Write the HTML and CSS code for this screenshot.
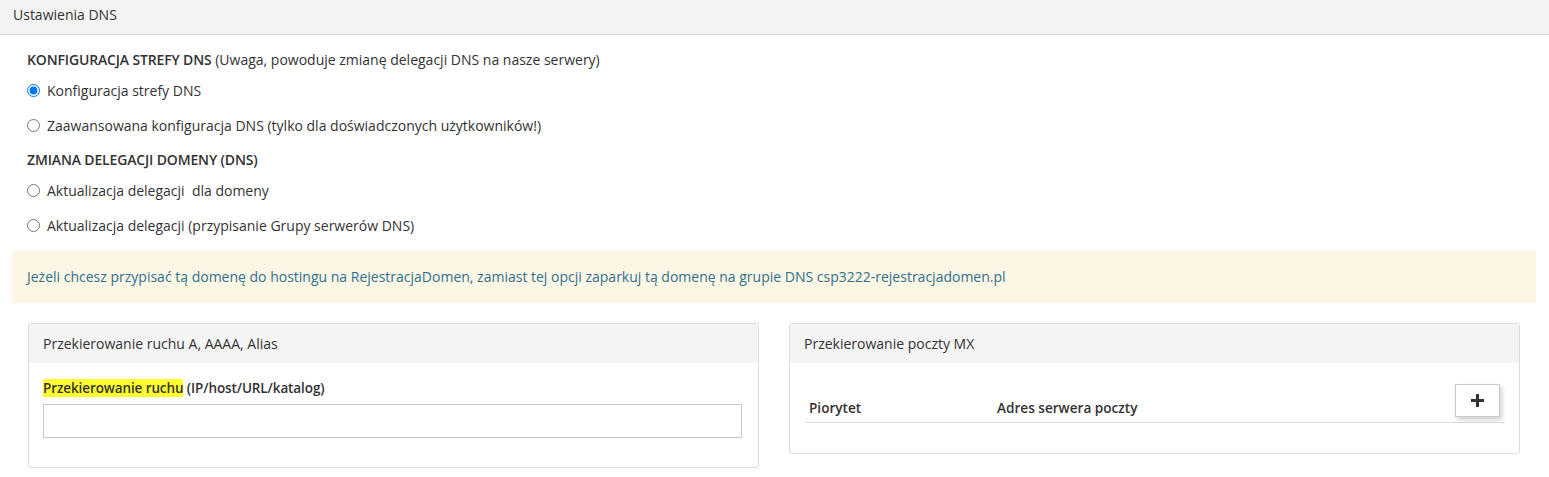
FILE: index.html
```html
<!DOCTYPE html>
<html lang="pl">
<head>
    <meta charset="UTF-8">
    <meta name="viewport" content="width=device-width, initial-scale=1.0">
    <title>Ustawienia DNS</title>
    <link rel="stylesheet" href="styles.css">
</head>
<body>
    <div class="panel-main">
        <div class="panel-main-heading">Ustawienia DNS</div>

        <div class="panel-main-body">
            <div class="form-section">
                <div class="section-title"><strong>KONFIGURACJA STREFY DNS</strong> (Uwaga, powoduje zmianę delegacji DNS na nasze serwery)</div>
                <label class="radio-row">
                    <input type="radio" name="dns_mode" checked>
                    <span>Konfiguracja strefy DNS</span>
                </label>
                <label class="radio-row">
                    <input type="radio" name="dns_mode">
                    <span>Zaawansowana konfiguracja DNS (tylko dla doświadczonych użytkowników!)</span>
                </label>

                <div class="section-title"><strong>ZMIANA DELEGACJI DOMENY (DNS)</strong></div>
                <label class="radio-row">
                    <input type="radio" name="dns_mode">
                    <span>Aktualizacja delegacji &nbsp;dla domeny</span>
                </label>
                <label class="radio-row last">
                    <input type="radio" name="dns_mode">
                    <span>Aktualizacja delegacji (przypisanie Grupy serwerów DNS)</span>
                </label>
            </div>

            <div class="alert-info-box">
                Jeżeli chcesz przypisać tą domenę do hostingu na RejestracjaDomen, zamiast tej opcji zaparkuj tą domenę na grupie DNS csp3222-rejestracjadomen.pl
            </div>

            <div class="panels-row">
                <div class="panel">
                    <div class="panel-heading">Przekierowanie ruchu A, AAAA, Alias</div>
                    <div class="panel-body">
                        <label class="field-label"><mark>Przekierowanie ruchu</mark> (IP/host/URL/katalog)</label>
                        <input type="text" class="form-control">
                    </div>
                </div>

                <div class="panel">
                    <div class="panel-heading">Przekierowanie poczty MX</div>
                    <div class="panel-body mx-body">
                        <table class="mx-table">
                            <thead>
                                <tr>
                                    <th class="col-prio">Piorytet</th>
                                    <th>Adres serwera poczty</th>
                                    <th class="col-add">
                                        <button class="btn-add" type="button">
                                            <svg viewBox="0 0 13 13" width="13" height="13">
                                                <path d="M6.5 0v13M0 6.5h13" stroke="#333" stroke-width="3"/>
                                            </svg>
                                        </button>
                                    </th>
                                </tr>
                            </thead>
                        </table>
                    </div>
                </div>
            </div>
        </div>
    </div>
</body>
</html>
```

FILE: styles.css
```css
* {
    margin: 0;
    padding: 0;
    box-sizing: border-box;
}

body {
    font-family: "Open Sans", "Liberation Sans", Arial, sans-serif;
    font-size: 14px;
    color: #333;
    background: #fff;
}

.panel-main-heading {
    height: 35px;
    padding: 6px 13px 0;
    line-height: 18px;
    background: #f3f3f3;
    border-bottom: 1px solid #dadada;
}

.panel-main-body {
    padding: 15px 13px 0 12px;
}

.form-section {
    padding-left: 15px;
}

.section-title {
    line-height: 20px;
    margin-bottom: 10px;
}

.section-title strong {
    font-weight: 600;
    letter-spacing: -0.15px;
}

.radio-row {
    display: flex;
    align-items: center;
    height: 20px;
    margin-bottom: 15px;
    cursor: pointer;
}

.radio-row.last {
    margin-bottom: 16px;
}

.radio-row input {
    width: 13px;
    height: 13px;
    margin: 0 7px 0 0;
}

.alert-info-box {
    height: 52px;
    padding: 0 15px;
    line-height: 51px;
    background: #fcf7e4;
    color: #31708f;
}

.panels-row {
    display: grid;
    grid-template-columns: 1fr 1fr;
    gap: 30px;
    align-items: start;
    margin-top: 20px;
    padding: 0 16px 0 16px;
}

.panel {
    border: 1px solid #dcdcdc;
    border-radius: 3px;
    overflow: hidden;
}

.panel-heading {
    height: 39px;
    padding: 0 14px;
    line-height: 39px;
    background: #f4f4f4;
}

.panel-body {
    padding: 16px 16px 29px 14px;
}

.field-label {
    display: block;
    font-size: 13.5px;
    font-weight: 600;
    letter-spacing: -0.1px;
    line-height: 19px;
    margin-bottom: 6px;
}

.field-label mark {
    background: #ffff2e;
    color: #333;
}

.form-control {
    display: block;
    width: 100%;
    height: 34px;
    border: 1px solid #c8c8c8;
    background: #fff;
    font: inherit;
    padding: 0 8px;
}

.mx-body {
    padding: 16px 14px 30px 15px;
}

.mx-table {
    width: 100%;
    border-collapse: collapse;
}

.mx-table th {
    text-align: left;
    font-size: 13.6px;
    font-weight: 600;
    line-height: 18px;
    vertical-align: bottom;
    padding: 5px 4px 5px;
    border-bottom: 1px solid #dcdcdc;
}

.mx-table .col-prio {
    width: 188px;
}

.mx-table .col-add {
    text-align: right;
    padding-right: 5px;
}

.btn-add {
    display: inline-flex;
    align-items: center;
    justify-content: center;
    width: 45px;
    height: 33px;
    background: #fff;
    border: 1px solid #c9c9c9;
    box-shadow: 2px 3px 5px rgba(0, 0, 0, 0.18);
    cursor: pointer;
    vertical-align: bottom;
}
```
